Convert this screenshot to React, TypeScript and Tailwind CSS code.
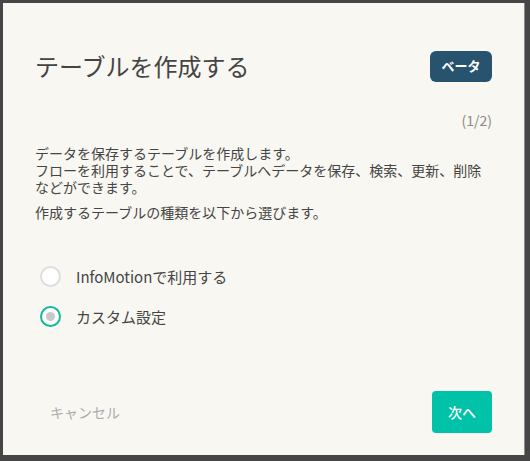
import { useState } from 'react'

const font = { fontFamily: '"Noto Sans CJK JP", "Noto Sans", sans-serif' }

type Option = { id: string; label: string }

const options: Option[] = [
    { id: 'infomotion', label: 'InfoMotionで利用する' },
    { id: 'custom', label: 'カスタム設定' },
]

function Radio({ checked }: { checked: boolean }) {
    if (checked) {
        return (
            <span className="flex h-[21px] w-[21px] items-center justify-center rounded-full border-2 border-[#14b89f] bg-white">
                <span className="h-[9px] w-[9px] rounded-full bg-[#c8c8c8]" />
            </span>
        )
    }
    return <span className="block h-[21px] w-[21px] rounded-full border-2 border-[#dedede] bg-white" />
}

export default function App() {
    const [selected, setSelected] = useState('custom')

    return (
        <div className="h-[461px] w-[530px] overflow-hidden bg-[#464646] pl-[3px] pt-[3px]" style={font}>
            <div className="flex h-[452px] w-[522px] flex-col border-r border-[#8c8c8c] bg-[#f8f7f1]">
                {/* header */}
                <div className="flex items-center justify-between pl-8 pr-[32px] pt-[47px]">
                    <h1 className="text-[24px] leading-[32px] text-[#454545]">テーブルを作成する</h1>
                    <span className="flex h-[31px] w-[62px] items-center justify-center rounded-[6px] bg-[#27536e] text-[13px] font-bold text-white">
                        ベータ
                    </span>
                </div>

                <div className="pr-[32px] pt-[29px] text-right text-[14px] leading-[18px] text-[#8a8a8a]">(1/2)</div>

                {/* description */}
                <div className="w-[457px] ml-8 pt-[16px] text-[14px] leading-[17px] text-[#454545]">
                    <p>
                        データを保存するテーブルを作成します。
                        <br />
                        フローを利用することで、テーブルへデータを保存、検索、更新、削除などができます。
                    </p>
                    <p className="mt-[8px]">作成するテーブルの種類を以下から選びます。</p>
                </div>

                {/* options */}
                <div className="flex flex-col gap-[19px] pl-[37px] pt-[45px]">
                    {options.map((o) => (
                        <label
                            key={o.id}
                            className="flex cursor-pointer items-center gap-[15px] text-[15px] leading-[21px] text-[#454545]"
                            onClick={() => setSelected(o.id)}
                        >
                            <Radio checked={selected === o.id} />
                            {o.label}
                        </label>
                    ))}
                </div>

                {/* footer */}
                <div className="mt-auto flex items-center justify-between pb-[22px] pl-[47px] pr-[32px]">
                    <button className="text-[14px] text-[#adadad]">キャンセル</button>
                    <button className="h-[42px] w-[60px] rounded-[4px] bg-[#00c2a8] text-[14px] font-medium text-white">
                        次へ
                    </button>
                </div>
            </div>
        </div>
    )
}
